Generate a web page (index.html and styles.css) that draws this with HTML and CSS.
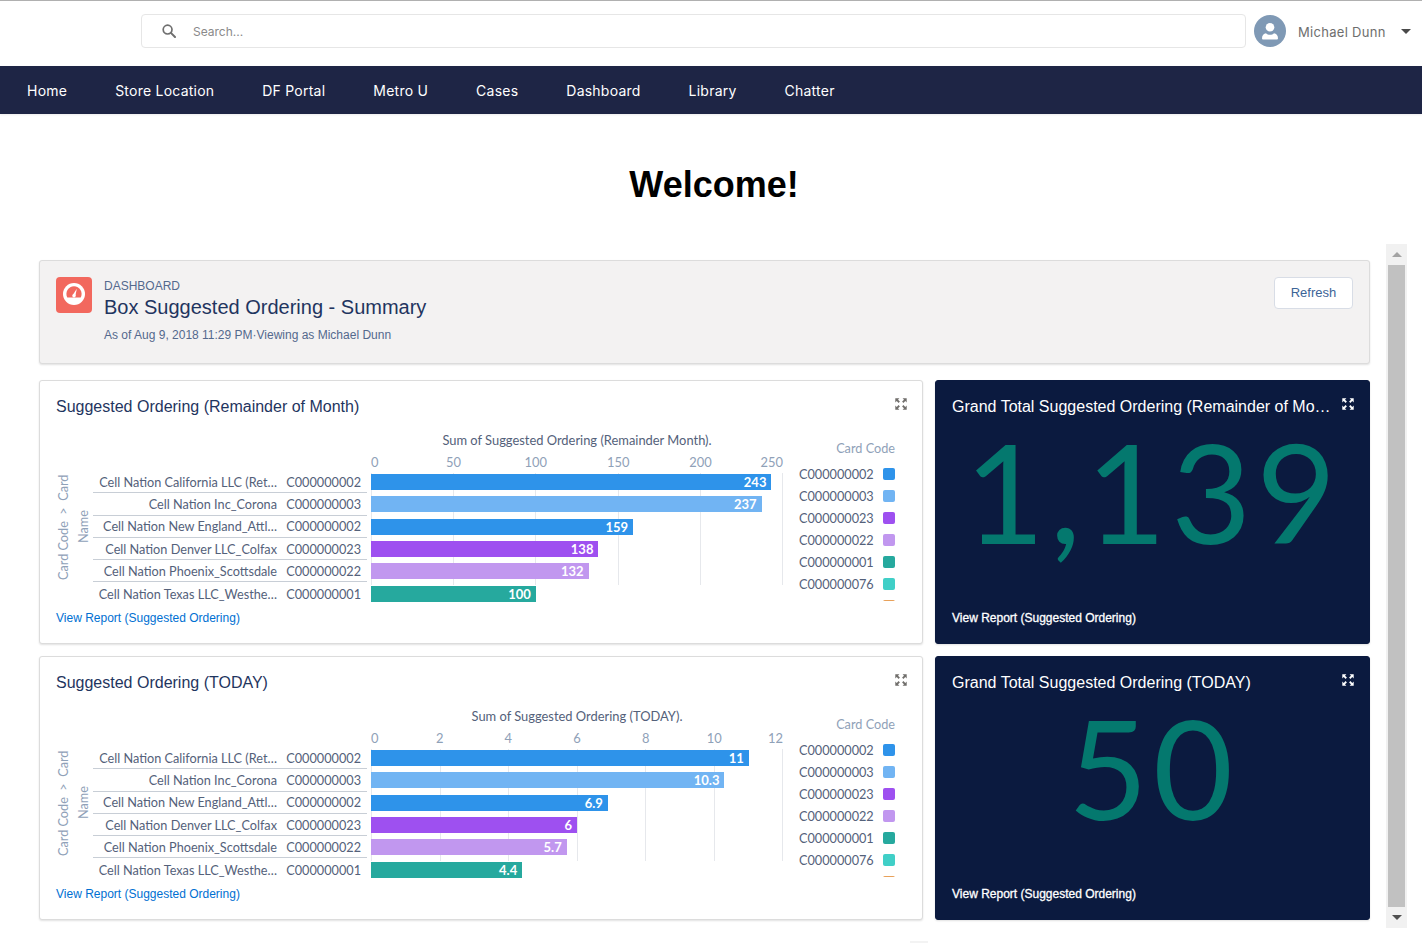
FILE: index.html
```html
<!DOCTYPE html>
<html lang="en">
<head>
<meta charset="utf-8">
<title>Welcome</title>
<link rel="stylesheet" href="styles.css">
</head>
<body>
<svg class="defs" width="0" height="0" aria-hidden="true">
  <symbol id="expand" viewBox="0 0 12 12">
    <path d="M0.3 0.3H4.4L3 1.7 4.9 3.6 3.6 4.9 1.7 3 0.3 4.4ZM11.7 0.3V4.4L10.3 3 8.4 4.9 7.1 3.6 9 1.7 7.6 0.3ZM0.3 11.7V7.6L1.7 9 3.6 7.1 4.9 8.4 3 10.3 4.4 11.7ZM11.7 11.7H7.6L9 10.3 7.1 8.4 8.4 7.1 10.3 9 11.7 7.6Z"/>
  </symbol>
</svg>
<header class="topbar">
  <div class="search">
    <svg class="search-icon" viewBox="0 0 14 14" width="14" height="14"><circle cx="5.6" cy="5.6" r="4.4" fill="none" stroke="#6f6f6f" stroke-width="1.7"/><path d="M8.9 8.9 13 13" stroke="#6f6f6f" stroke-width="2" stroke-linecap="round"/></svg>
    <span class="search-text">Search...</span>
  </div>
  <div class="avatar">
    <svg viewBox="0 0 32 32" width="32" height="32"><circle cx="16" cy="12.2" r="4.3" fill="#fff"/><path d="M8 23.2c0-2.9 1.8-4.6 4-5 1.1 1 2.4 1.5 4 1.5s2.900-.5 4-1.500c2.200.4 4 2.100 4 5 0 .8-.6 1.300-1.300 1.300H9.300C8.600 24.500 8 24 8 23.200z" fill="#fff"/></svg>
  </div>
  <span class="user-name">Michael Dunn</span>
  <span class="caret"></span>
</header>
<nav class="mainnav">
  <a>Home</a><a>Store Location</a><a>DF Portal</a><a>Metro U</a><a>Cases</a><a>Dashboard</a><a>Library</a><a>Chatter</a>
</nav>
<h1 class="welcome">Welcome!</h1>
<div class="frame">
  <main class="dash">
    <section class="dash-head">
      <div class="dash-icon">
        <svg viewBox="0 0 36 36" width="36" height="36"><g transform="translate(0 -1)"><circle cx="18" cy="18" r="11" fill="#fff"/><path d="M11.300 21.500a7.600 7.600 0 1 1 13.400 0z" fill="#f2685e"/><path d="M16.600 19.200 20.800 12.800 19.300 20.200z" fill="#fff"/><circle cx="18" cy="19.700" r="1.700" fill="#fff"/></g></svg>
      </div>
      <div class="dash-titles">
        <div class="dash-kicker">DASHBOARD</div>
        <div class="dash-title">Box Suggested Ordering - Summary</div>
        <div class="dash-meta">As of Aug 9, 2018 11:29 PM·Viewing as Michael Dunn</div>
      </div>
      <button class="refresh">Refresh</button>
    </section>

    <div class="widgets">
      <section class="card">
        <div class="card-head"><h2>Suggested Ordering (Remainder of Month)</h2><svg class="expand" width="12" height="12"><use href="#expand"/></svg></div>
        <div class="chart">
          <div class="ytitle"><span>Card Code &nbsp;&gt;&nbsp; Card Name</span></div>
          <div class="rows">
            <div class="row"><span class="name">Cell Nation California LLC (Ret…</span><span class="code">C000000002</span></div>
            <div class="row"><span class="name">Cell Nation Inc_Corona</span><span class="code">C000000003</span></div>
            <div class="row"><span class="name">Cell Nation New England_Attl…</span><span class="code">C000000002</span></div>
            <div class="row"><span class="name">Cell Nation Denver LLC_Colfax</span><span class="code">C000000023</span></div>
            <div class="row"><span class="name">Cell Nation Phoenix_Scottsdale</span><span class="code">C000000022</span></div>
            <div class="row"><span class="name">Cell Nation Texas LLC_Westhe…</span><span class="code">C000000001</span></div>
          </div>
          <div class="plot">
            <div class="plot-title">Sum of Suggested Ordering (Remainder Month).</div>
            <div class="ticks"><span>0</span><span>50</span><span>100</span><span>150</span><span>200</span><span>250</span></div>
            <div class="bars">
              <div class="grid"><i></i><i></i><i></i><i></i><i></i><i></i></div>
              <div class="bar-row"><div class="bar c2" style="width:97.2%">243</div></div>
              <div class="bar-row"><div class="bar c3" style="width:94.8%">237</div></div>
              <div class="bar-row"><div class="bar c2" style="width:63.6%">159</div></div>
              <div class="bar-row"><div class="bar c23" style="width:55.2%">138</div></div>
              <div class="bar-row"><div class="bar c22" style="width:52.8%">132</div></div>
              <div class="bar-row"><div class="bar c1" style="width:40%">100</div></div>
            </div>
          </div>
          <div class="legend">
            <div class="legend-title">Card Code</div>
            <ul class="legend-list">
              <li>C000000002<b class="c2"></b></li>
              <li>C000000003<b class="c3"></b></li>
              <li>C000000023<b class="c23"></b></li>
              <li>C000000022<b class="c22"></b></li>
              <li>C000000001<b class="c1"></b></li>
              <li>C000000076<b class="c76"></b></li>
              <li><b class="cx"></b></li>
            </ul>
          </div>
        </div>
        <a class="card-foot">View Report (Suggested Ordering)</a>
      </section>

      <section class="card card-dark">
        <div class="card-head"><h2>Grand Total Suggested Ordering (Remainder of Mo…</h2><svg class="expand" width="12" height="12"><use href="#expand"/></svg></div>
        <div class="metric">1,139</div>
        <a class="card-foot">View Report (Suggested Ordering)</a>
      </section>

      <section class="card">
        <div class="card-head"><h2>Suggested Ordering (TODAY)</h2><svg class="expand" width="12" height="12"><use href="#expand"/></svg></div>
        <div class="chart">
          <div class="ytitle"><span>Card Code &nbsp;&gt;&nbsp; Card Name</span></div>
          <div class="rows">
            <div class="row"><span class="name">Cell Nation California LLC (Ret…</span><span class="code">C000000002</span></div>
            <div class="row"><span class="name">Cell Nation Inc_Corona</span><span class="code">C000000003</span></div>
            <div class="row"><span class="name">Cell Nation New England_Attl…</span><span class="code">C000000002</span></div>
            <div class="row"><span class="name">Cell Nation Denver LLC_Colfax</span><span class="code">C000000023</span></div>
            <div class="row"><span class="name">Cell Nation Phoenix_Scottsdale</span><span class="code">C000000022</span></div>
            <div class="row"><span class="name">Cell Nation Texas LLC_Westhe…</span><span class="code">C000000001</span></div>
          </div>
          <div class="plot">
            <div class="plot-title">Sum of Suggested Ordering (TODAY).</div>
            <div class="ticks"><span>0</span><span>2</span><span>4</span><span>6</span><span>8</span><span>10</span><span>12</span></div>
            <div class="bars">
              <div class="grid"><i></i><i></i><i></i><i></i><i></i><i></i><i></i></div>
              <div class="bar-row"><div class="bar c2" style="width:91.7%">11</div></div>
              <div class="bar-row"><div class="bar c3" style="width:85.8%">10.3</div></div>
              <div class="bar-row"><div class="bar c2" style="width:57.5%">6.9</div></div>
              <div class="bar-row"><div class="bar c23" style="width:50%">6</div></div>
              <div class="bar-row"><div class="bar c22" style="width:47.5%">5.7</div></div>
              <div class="bar-row"><div class="bar c1" style="width:36.7%">4.4</div></div>
            </div>
          </div>
          <div class="legend">
            <div class="legend-title">Card Code</div>
            <ul class="legend-list">
              <li>C000000002<b class="c2"></b></li>
              <li>C000000003<b class="c3"></b></li>
              <li>C000000023<b class="c23"></b></li>
              <li>C000000022<b class="c22"></b></li>
              <li>C000000001<b class="c1"></b></li>
              <li>C000000076<b class="c76"></b></li>
              <li><b class="cx"></b></li>
            </ul>
          </div>
        </div>
        <a class="card-foot">View Report (Suggested Ordering)</a>
      </section>

      <section class="card card-dark">
        <div class="card-head"><h2>Grand Total Suggested Ordering (TODAY)</h2><svg class="expand" width="12" height="12"><use href="#expand"/></svg></div>
        <div class="metric">50</div>
        <a class="card-foot">View Report (Suggested Ordering)</a>
      </section>
    </div>
  </main>
  <div class="scrollbar">
    <div class="sb-btn"><span class="sb-up"></span></div>
    <div class="sb-thumb"></div>
    <div class="sb-btn"><span class="sb-down"></span></div>
  </div>
</div>
<div class="stub"></div>
</body>
</html>
```

FILE: styles.css
```css
* { box-sizing: border-box; }
html, body { margin: 0; padding: 0; height: 943px; overflow: hidden; background: #fff; }
body { font-family: "Liberation Sans", Arial, sans-serif; color: #16325c; }
.defs { position: absolute; }

.topbar { height: 66px; border-top: 1px solid #b0b0b0; padding: 13px 0 0 141px; display: flex; align-items: flex-start; }
.search { width: 1105px; height: 34px; flex: none; border: 1px solid #e6e6e6; border-radius: 4px; display: flex; align-items: center; padding-left: 20px; }
.search-icon { flex: none; }
.search-text { margin-left: 17px; font: 12px Inter, sans-serif; color: #8a8a8a; }
.avatar { width: 32px; height: 32px; border-radius: 50%; background: #7f99b5; margin: 1px 0 0 8px; flex: none; overflow: hidden; }
.user-name { margin: 10px 0 0 12px; font: 13px Inter, sans-serif; letter-spacing: .3px; color: #6e6e6e; white-space: nowrap; flex: none; }
.caret { margin: 15px 0 0 15px; flex: none; border: 5px solid transparent; border-top-color: #4a4a4a; border-bottom: 0; }

.mainnav { height: 48px; background: #1e2545; display: flex; align-items: center; gap: 48px; padding-left: 27px; box-shadow: 0 1px 2px rgba(0,0,0,.08); }
.mainnav a { font: 400 14px Inter, sans-serif; color: #fff; letter-spacing: .23px; white-space: nowrap; }

.welcome { margin: 0; height: 130px; padding: 51px 0 0 6px; text-align: center; font: bold 36px/40px "Liberation Sans", Arial, sans-serif; color: #000; }

.frame { display: flex; gap: 16px; height: 684px; padding-left: 39px; }
.dash { width: 1331px; padding-top: 16px; }

.dash-head { height: 104px; background: #f3f2f2; border: 1px solid #dcdcdc; border-radius: 3px; box-shadow: 0 1px 2px rgba(0,0,0,.12); display: flex; align-items: flex-start; padding: 16px; }
.dash-icon { width: 36px; height: 36px; background: #f2685e; border-radius: 4px; flex: none; }
.dash-titles { margin-left: 12px; flex: 1; padding-top: 1px; }
.dash-kicker { font-size: 12px; line-height: 16px; color: #54698d; }
.dash-title { font-size: 20px; line-height: 28px; margin-top: -1px; color: #1f3560; }
.dash-meta { font-size: 12px; line-height: 16px; margin-top: 6px; color: #54698d; }
.refresh { width: 79px; height: 32px; background: #fff; border: 1px solid #d8dde6; border-radius: 4px; font: 13px "Liberation Sans", Arial, sans-serif; color: #3c6497; padding: 0 0 2px; }

.widgets { margin-top: 16px; display: grid; grid-template-columns: 884px 435px; grid-auto-rows: 264px; column-gap: 12px; row-gap: 12px; }
.card { background: #fff; border: 1px solid #dcdcdc; border-radius: 3px; box-shadow: 0 1px 2px rgba(0,0,0,.12); display: flex; flex-direction: column; padding: 0 15px 0 16px; min-width: 0; }
.card-head { height: 50px; padding-top: 1px; display: flex; align-items: center; gap: 4px; flex: none; }
.card-head h2 { margin: 0; flex: 1; min-width: 0; font-size: 16px; font-weight: 400; line-height: 49px; color: #1f3560; white-space: nowrap; }
.expand { flex: none; fill: #706e6b; margin-top: -5px; }
.card-foot { margin-top: auto; padding-bottom: 17px; font-size: 12px; line-height: 16px; color: #0070d2; flex: none; }

.card-dark { background: #0b1a3f; border-color: #0b1a3f; }
.card-dark .card-head h2 { color: #fff; }
.card-dark .expand { fill: #fff; }
.card-dark .card-foot { color: #fff; -webkit-text-stroke: .3px #fff; }
.metric { font: 400 138px/120px Lato, sans-serif; letter-spacing: 5px; color: #04786e; text-align: center; white-space: nowrap; }

.chart { display: flex; font-family: Lato, sans-serif; font-size: 12.7px; height: 174px; flex: none; }
.ytitle { width: 37px; margin-top: 40px; height: 114px; display: flex; justify-content: flex-start; }
.ytitle span { writing-mode: vertical-rl; transform: rotate(180deg); text-align: center; max-height: 112px; width: 40px; line-height: 20px; color: #8fa1b8; margin-left: -3px; }
.rows { width: 274px; margin-top: 40px; flex: none; }
.row { height: 22.3px; display: flex; align-items: center; border-bottom: 1px solid #c8ced6; color: #54617a; white-space: nowrap; }
.row:last-child { border-bottom: 0; }
.name { width: 184px; text-align: right; }
.code { width: 84px; text-align: right; }
.plot { width: 412px; margin-left: 4px; flex: none; font-size: 12.9px; }
.plot-title { height: 20px; line-height: 18px; text-align: center; color: #54617a; }
.ticks { height: 20px; display: flex; justify-content: space-between; color: #8fa1b8; line-height: 22px; }
.ticks span { width: 0; display: flex; justify-content: center; white-space: nowrap; }
.ticks span:first-child { justify-content: flex-start; }
.ticks span:last-child { justify-content: flex-end; }
.bars { position: relative; }
.grid { position: absolute; left: 0; right: 0; top: 2px; height: 112px; display: flex; justify-content: space-between; }
.grid i { width: 1px; background: #e6e8ec; }
.bar-row { position: relative; height: 22.3px; display: flex; align-items: center; }
.bar { height: 16px; line-height: 16px; text-align: right; padding-right: 5px; color: #fff; font-weight: 700; font-size: 13px; }
.c2 { background: #2e93ea; }
.c3 { background: #71b4f3; }
.c23 { background: #9e50f0; }
.c22 { background: #c197ef; }
.c1 { background: #26a99e; }
.c76 { background: #40cfc7; }
.cx { background: #e8a15a; }
.legend { margin-left: 16px; width: 96px; flex: none; }
.legend-title { height: 32px; padding-top: 9px; line-height: 16px; text-align: right; color: #8fa1b8; }
.legend-list { list-style: none; margin: 0; padding: 0; height: 138px; overflow: hidden; }
.legend-list li { height: 22px; display: flex; align-items: center; justify-content: space-between; color: #54617a; }
.legend-list b { width: 12px; height: 12px; border-radius: 2px; margin-left: auto; }

.scrollbar { width: 21px; height: 684px; background: #f1f1f1; display: flex; flex-direction: column; align-items: center; }
.sb-btn { height: 21px; flex: none; width: 100%; display: flex; align-items: center; justify-content: center; }
.sb-thumb { flex: 1; width: 17px; background: #c1c1c1; }
.sb-up { border: 5px solid transparent; border-bottom-color: #a3a3a3; border-top: 0; }
.sb-down { border: 5px solid transparent; border-top-color: #505050; border-bottom: 0; }

.stub { width: 18px; height: 3px; margin: 13px 0 0 910px; background: #f3f3f3; }
```
